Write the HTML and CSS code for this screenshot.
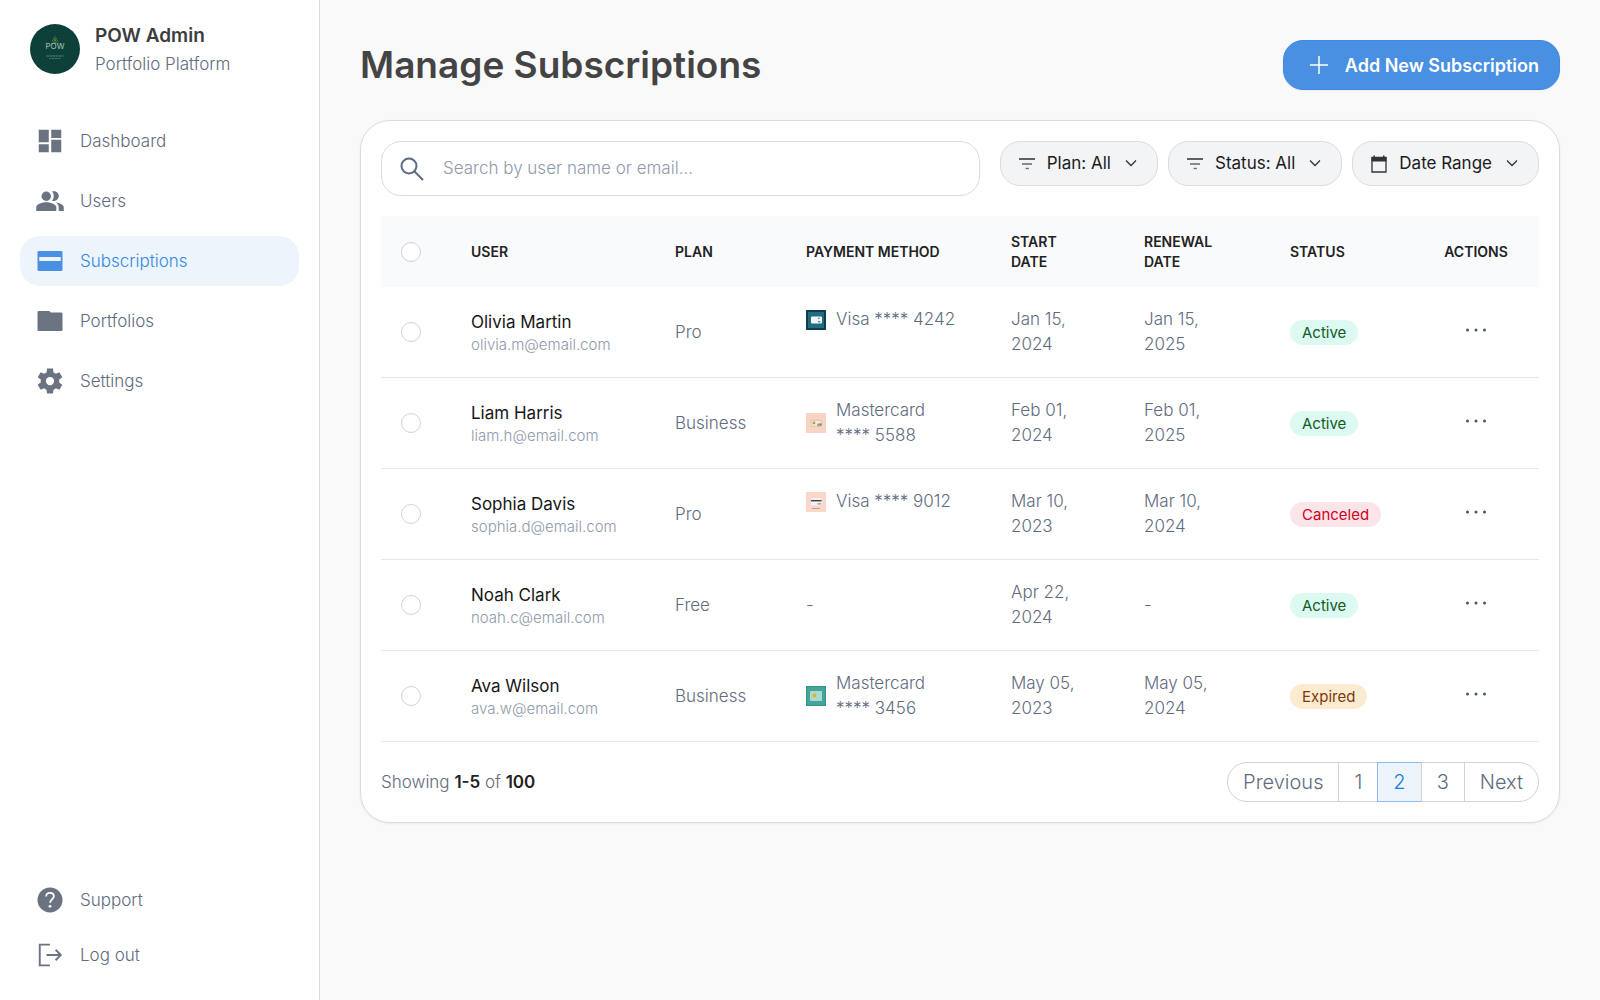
FILE: index.html
```
<!DOCTYPE html>
<html lang="en">
<head>
<meta charset="utf-8">
<meta name="viewport" content="width=device-width, initial-scale=1">
<title>Manage Subscriptions</title>
<link rel="stylesheet" href="styles.css">
</head>
<body>
<svg class="sprite" aria-hidden="true">
  <symbol id="filter" viewBox="0 0 20 20"><path d="M2 5h16" stroke="#222" stroke-width="1.4"/><path d="M5 10h10" stroke="#444" stroke-width="1.2"/><path d="M8.500 14.500h3.500" stroke="#777" stroke-width="1.4"/></symbol>
  <symbol id="chevron" viewBox="0 0 20 20"><path d="M5 6.500l5 5 5-5" fill="none" stroke="#333" stroke-width="1.300"/></symbol>
  <symbol id="dots" viewBox="0 0 24 20"><g fill="#475569"><circle cx="3.500" cy="11" r="1.500"/><circle cx="12" cy="11" r="1.500"/><circle cx="20.500" cy="11" r="1.500"/></g></symbol>
</svg>
<div class="app">
  <aside class="sidebar">
    <div class="brand">
      <svg class="avatar" viewBox="0 0 50 50" role="img" aria-label="POW logo">
        <circle cx="25" cy="25" r="25" fill="#0c4038"/>
        <path d="M25 12v8M25 20l-3-4M25 20l3-4M25 17l-2-3M25 17l2-3M23 20l-2-1M27 20l2-1" stroke="#6f7f52" stroke-width=".8" fill="none"/>
        <text x="25" y="24.500" text-anchor="middle" class="avatar-name">POW</text>
        <path d="M16.500 32h17" stroke="#5d8a82" stroke-width="1" stroke-dasharray="3 .6 2 .5"/>
        <path d="M19 34.500h12" stroke="#49776f" stroke-width=".9" stroke-dasharray="2 .5 3 .5"/>
      </svg>
      <div>
        <div class="brand-name">POW Admin</div>
        <div class="brand-sub">Portfolio Platform</div>
      </div>
    </div>
    <nav class="nav" aria-label="Main">
      <a class="item" href="#"><svg viewBox="0 0 24 24"><path d="M3 3h8v10H3zM13 3h8v6.500h-8zM13 11h8v10h-8zM3 14.500h8V21H3z"/></svg>Dashboard</a>
      <a class="item" href="#"><svg viewBox="0 0 24 24"><path d="M16.670 13.130C18.040 14.060 19 15.320 19 17v3h4v-3c0-2.180-3.570-3.470-6.330-3.870z"/><circle cx="9" cy="8.200" r="3.800"/><path d="M15 12c2.210 0 4-1.790 4-4s-1.790-3.800-4-3.800c-.470 0-.910.1-1.330.240C14.500 5.270 15 6.580 15 8s-.500 2.730-1.330 3.760c.420.140.860.240 1.330.240zM9 13c-2.670 0-8 1.340-8 4v3h16v-3c0-2.660-5.330-4-8-4z"/></svg>Users</a>
      <a class="item active" href="#" aria-current="page"><svg viewBox="0 0 24 24"><path fill-rule="evenodd" d="M3 4h18a1 1 0 0 1 1 1v14a1 1 0 0 1-1 1H3a1 1 0 0 1-1-1V5a1 1 0 0 1 1-1zM3.400 8.700v3.200h17.200V8.700z"/></svg>Subscriptions</a>
      <a class="item" href="#"><svg viewBox="0 0 24 24"><path d="M3 4h8.400l1.300 1.200H21a1 1 0 0 1 1 1V19a1 1 0 0 1-1 1H3a1 1 0 0 1-1-1V5a1 1 0 0 1 1-1z"/></svg>Portfolios</a>
      <a class="item" href="#"><svg viewBox="0 0 24 24"><path d="M9.600 2h4.800l.500 5h-5.800zM9.600 22h4.800l.5-5h-5.800z"/><path d="M9.600 2h4.800l.500 5h-5.800zM9.600 22h4.800l.5-5h-5.800z" transform="rotate(60 12 12)"/><path d="M9.600 2h4.800l.500 5h-5.800zM9.600 22h4.800l.5-5h-5.800z" transform="rotate(120 12 12)"/><circle cx="12" cy="12" r="5.400" fill="none" stroke="currentColor" stroke-width="4.200"/></svg>Settings</a>
    </nav>
    <nav class="nav nav-foot" aria-label="Account">
      <a class="item" href="#"><svg viewBox="0 0 24 24"><circle cx="12" cy="12" r="10"/><path d="M8.900 9.200c0-1.800 1.300-3 3.100-3s3.100 1.100 3.100 2.800c0 2.300-3 2.600-3 5.200" fill="none" stroke="#fff" stroke-width="1.400"/><circle cx="12" cy="17" r="1.100" fill="#fff"/></svg>Support</a>
      <a class="item" href="#"><svg viewBox="0 0 24 24"><g fill="none" stroke="currentColor" stroke-width="1.500"><path d="M12 3.700H3.800v16.600H12M9.200 12h11"/><path d="M16.500 7.800l4.100 4.200-4.100 4.200"/></g></svg>Log out</a>
    </nav>
  </aside>

  <main class="main">
    <header class="top">
      <h1>Manage Subscriptions</h1>
      <button class="add" type="button"><svg viewBox="0 0 20 20"><path d="M10 1v18M1 10h18" stroke="#fff" stroke-width="1.500"/></svg>Add New Subscription</button>
    </header>

    <section class="card">
      <div class="tools">
        <label class="search">
          <svg viewBox="0 0 24 24" aria-hidden="true"><circle cx="9" cy="9" r="7.500"/><path d="M14.500 14.500L23 23"/></svg>
          <input type="search" placeholder="Search by user name or email..." aria-label="Search by user name or email">
        </label>
        <div class="filters">
          <button type="button"><svg><use href="#filter"/></svg>Plan: All<svg><use href="#chevron"/></svg></button>
          <button type="button"><svg><use href="#filter"/></svg>Status: All<svg><use href="#chevron"/></svg></button>
          <button type="button"><svg viewBox="0 0 20 20"><path d="M3 3.500h14V18H3z" fill="none" stroke="#333" stroke-width="1.300"/><path d="M2.500 3h15v4.500h-15zM4.500 1.500H6V4H4.500zM14 1.500h1.500V4H14z" fill="#333"/></svg>Date Range<svg><use href="#chevron"/></svg></button>
        </div>
      </div>

      <table>
        <colgroup><col class="c-check"><col class="c-user"><col class="c-plan"><col class="c-pay"><col class="c-start"><col class="c-renew"><col class="c-status"><col class="c-act"></colgroup>
        <thead>
          <tr><th><input type="checkbox" aria-label="Select all"></th><th>USER</th><th>PLAN</th><th class="nowrap">PAYMENT METHOD</th><th>START DATE</th><th>RENEWAL DATE</th><th>STATUS</th><th class="act">ACTIONS</th></tr>
        </thead>
        <tbody>
          <tr>
            <td><input type="checkbox" aria-label="Select Olivia Martin"></td>
            <td><div class="name">Olivia Martin</div><div class="mail">olivia.m@email.com</div></td>
            <td>Pro</td>
            <td class="pay"><div><svg viewBox="0 0 20 20"><path fill="#0e3d50" d="M0 0h20v20H0z"/><path fill="#236b80" d="M2 2h16v16H2z"/><rect x="5" y="6.500" width="11" height="7" rx="1" fill="#eef6fa"/><path fill="#236b80" d="M12 7.800h1.500v1H12zM12 11.300h2.500v1H12z"/></svg>Visa **** 4242</div></td>
            <td>Jan 15, 2024</td><td>Jan 15, 2025</td>
            <td><span class="badge ok">Active</span></td>
            <td class="act"><button type="button" aria-label="Actions"><svg><use href="#dots"/></svg></button></td>
          </tr>
          <tr>
            <td><input type="checkbox" aria-label="Select Liam Harris"></td>
            <td><div class="name">Liam Harris</div><div class="mail">liam.h@email.com</div></td>
            <td>Business</td>
            <td class="pay"><div><svg viewBox="0 0 20 20"><path fill="#f9d3c3" d="M0 0h20v20H0z"/><path fill="#f1ede5" stroke="#b8b3a8" stroke-width=".6" d="M5.300 7.300h10v6h-10z"/><circle cx="8" cy="10" r="1.400" fill="#c89a20"/><circle cx="12.500" cy="11.700" r="1.500" fill="#e8903c"/><circle cx="14.500" cy="11.500" r="1.300" fill="#4d9bab"/></svg>Mastercard **** 5588</div></td>
            <td>Feb 01, 2024</td><td>Feb 01, 2025</td>
            <td><span class="badge ok">Active</span></td>
            <td class="act"><button type="button" aria-label="Actions"><svg><use href="#dots"/></svg></button></td>
          </tr>
          <tr>
            <td><input type="checkbox" aria-label="Select Sophia Davis"></td>
            <td><div class="name">Sophia Davis</div><div class="mail">sophia.d@email.com</div></td>
            <td>Pro</td>
            <td class="pay"><div><svg viewBox="0 0 20 20"><path fill="#f9d8cb" d="M0 0h20v20H0z"/><path fill="#fdeee8" d="M5 6h10.500v7.500H5z"/><path fill="#25495c" d="M5 8h10.500v1.400H5z"/><path fill="#a58b85" d="M11.500 11.300h3.500v1.200h-3.500zM6 16h8v.8H6z"/></svg>Visa **** 9012</div></td>
            <td>Mar 10, 2023</td><td>Mar 10, 2024</td>
            <td><span class="badge bad">Canceled</span></td>
            <td class="act"><button type="button" aria-label="Actions"><svg><use href="#dots"/></svg></button></td>
          </tr>
          <tr>
            <td><input type="checkbox" aria-label="Select Noah Clark"></td>
            <td><div class="name">Noah Clark</div><div class="mail">noah.c@email.com</div></td>
            <td>Free</td>
            <td>-</td>
            <td>Apr 22, 2024</td><td>-</td>
            <td><span class="badge ok">Active</span></td>
            <td class="act"><button type="button" aria-label="Actions"><svg><use href="#dots"/></svg></button></td>
          </tr>
          <tr>
            <td><input type="checkbox" aria-label="Select Ava Wilson"></td>
            <td><div class="name">Ava Wilson</div><div class="mail">ava.w@email.com</div></td>
            <td>Business</td>
            <td class="pay"><div><svg viewBox="0 0 20 20"><path fill="#2f9587" d="M0 0h20v20H0z"/><path fill="#48a398" d="M1 1h18v18H1z"/><rect x="4" y="5" width="12" height="10" rx="1" fill="#a6dcd0"/><circle cx="8.500" cy="9.500" r="2" fill="#efa92e"/></svg>Mastercard **** 3456</div></td>
            <td>May 05, 2023</td><td>May 05, 2024</td>
            <td><span class="badge warn">Expired</span></td>
            <td class="act"><button type="button" aria-label="Actions"><svg><use href="#dots"/></svg></button></td>
          </tr>
        </tbody>
      </table>

      <footer class="foot">
        <p>Showing <strong>1-5</strong> of <strong>100</strong></p>
        <nav class="pages" aria-label="Pagination"><a href="#">Previous</a><a href="#">1</a><a class="current" href="#" aria-current="page">2</a><a href="#">3</a><a href="#">Next</a></nav>
      </footer>
    </section>
  </main>
</div>
</body>
</html>
```
FILE: styles.css
```
* { box-sizing: border-box; }

body {
  margin: 0;
  background: #f9f9f9;
  color: #5f6b80;
  font: 300 17px/25px Inter, "Liberation Sans", sans-serif;
}

.sprite { display: none; }
svg { flex: none; }
button { font: inherit; cursor: pointer; }

.app {
  display: grid;
  grid-template-columns: 320px minmax(0, 1fr);
  min-height: 100vh;
}

/* Sidebar */
.sidebar {
  display: flex;
  flex-direction: column;
  padding: 20px;
  background: #fff;
  border-right: 1px solid #dcdcde;
}
.brand {
  display: flex;
  align-items: center;
  gap: 15px;
  height: 58px;
  padding: 0 10px;
  margin-bottom: 38px;
}
.avatar { width: 50px; height: 50px; }
.avatar-name { font: 300 8px Inter, sans-serif; fill: #d5e2da; }
.brand-name { color: #3d3d3d; font-size: 19px; font-weight: 600; line-height: 30px; }
.brand-sub { line-height: 26px; }

.nav { display: flex; flex-direction: column; gap: 10px; }
.nav-foot { margin-top: auto; gap: 5px; }
.item {
  display: flex;
  align-items: center;
  gap: 15px;
  height: 50px;
  padding: 0 15px;
  border-radius: 20px;
  color: inherit;
  text-decoration: none;
}
.item svg { width: 30px; height: 30px; fill: currentColor; color: #6b7280; }
.item.active { background: #edf4fc; color: #3389e6; }
.item.active svg { color: #4a90e2; }

/* Page header */
.main { padding: 40px; }
.top {
  display: flex;
  align-items: center;
  justify-content: space-between;
  gap: 20px;
  margin-bottom: 30px;
}
h1 { margin: 0; color: #444; font-size: 37px; font-weight: 600; line-height: 50px; }
.add {
  display: flex;
  align-items: center;
  gap: 16px;
  height: 50px;
  padding: 0 20px 0 25px;
  border: 1px solid #3b8ae3;
  border-radius: 20px;
  background: #4a90e2;
  color: #fff;
  font-size: 18px;
  font-weight: 600;
  box-shadow: 0 1px 2px rgba(0, 0, 0, .05);
}
.add svg { width: 20px; height: 20px; }

/* Card */
.card {
  padding: 20px;
  background: #fff;
  border: 1px solid #dcdcde;
  border-radius: 30px;
  box-shadow: 0 1px 3px rgba(0, 0, 0, .06);
}
.tools { display: flex; align-items: flex-start; gap: 20px; margin-bottom: 20px; }
.search {
  display: flex;
  flex: 1;
  align-items: center;
  gap: 19px;
  height: 55px;
  padding: 0 18px;
  border: 1px solid #dcdcde;
  border-radius: 20px;
}
.search svg { width: 24px; height: 24px; fill: none; stroke: #5f6b80; stroke-width: 2; }
.search input {
  flex: 1;
  min-width: 0;
  padding: 0;
  border: 0;
  outline: 0;
  background: none;
  color: #222;
  font: inherit;
}
.search input::placeholder { color: #8f99aa; opacity: 1; }
.filters { display: flex; gap: 10px; }
.filters button {
  display: flex;
  align-items: center;
  gap: 10px;
  height: 45px;
  padding: 0 16px;
  border: 1px solid #dcdcde;
  border-radius: 20px;
  background: #f3f4f6;
  color: #1c1c1c;
  font-weight: 400;
  white-space: nowrap;
}
.filters svg { width: 20px; height: 20px; }

/* Table */
table { width: 100%; table-layout: fixed; border-collapse: separate; border-spacing: 0; }
.c-check { width: 60px; }
.c-user { width: 204px; }
.c-plan { width: 131px; }
.c-pay { width: 205px; }
.c-start { width: 133px; }
.c-renew { width: 146px; }
.c-status { width: 153px; }
.c-act { width: 126px; }
th, td { padding: 20px 30px; text-align: left; vertical-align: middle; }
th {
  height: 71px;
  padding: 15px 30px;
  background: #f9fafc;
  color: #222;
  font-size: 14px;
  font-weight: 600;
  line-height: 20px;
}
.nowrap { white-space: nowrap; }
td { height: 91px; border-bottom: 1px solid #e5e7eb; }
th:first-child, td:first-child { padding: 0 20px; }
td.pay { padding-right: 20px; vertical-align: top; }
th.act, td.act { padding: 0; text-align: center; }
.pay div { display: flex; align-items: center; gap: 10px; }
.pay svg { width: 20px; height: 20px; }
.name { color: #161616; font-weight: 400; }
.mail { color: #8f99aa; font-size: 15px; line-height: 20px; }
.act button { padding: 0; border: 0; background: none; }
.act svg { display: block; width: 24px; height: 20px; }

input[type="checkbox"] {
  appearance: none;
  display: block;
  width: 20px;
  height: 20px;
  margin: 0;
  border: 1px solid #cfd3da;
  border-radius: 50%;
  background: #fff;
}
input[type="checkbox"]:checked { background: #4a90e2; }

.badge {
  display: inline-block;
  padding: 0 12px;
  border-radius: 13px;
  font-size: 15px;
  font-weight: 400;
  vertical-align: middle;
}
.ok { background: #dcf9f2; color: #135c24; }
.bad { background: #fbe5e8; color: #d1001c; }
.warn { background: #fdebd1; color: #7c3a0a; }

/* Table footer */
.foot { display: flex; align-items: center; justify-content: space-between; margin-top: 20px; }
.foot p { margin: 0; }
.foot strong { color: #222; font-weight: 600; }
.pages { display: flex; border: 1px solid #cfd3da; border-radius: 20px; }
.pages a {
  height: 38px;
  padding: 0 15px;
  border-left: 1px solid #cfd3da;
  color: inherit;
  font-size: 20px;
  line-height: 38px;
  text-decoration: none;
}
.pages a:first-child { border-left: 0; }
.pages .current {
  margin: -1px 0;
  border: 1px solid #8cb9ee;
  border-right: 0;
  background: #edf4fc;
  color: #1f7de0;
  height: 40px;
}
```
